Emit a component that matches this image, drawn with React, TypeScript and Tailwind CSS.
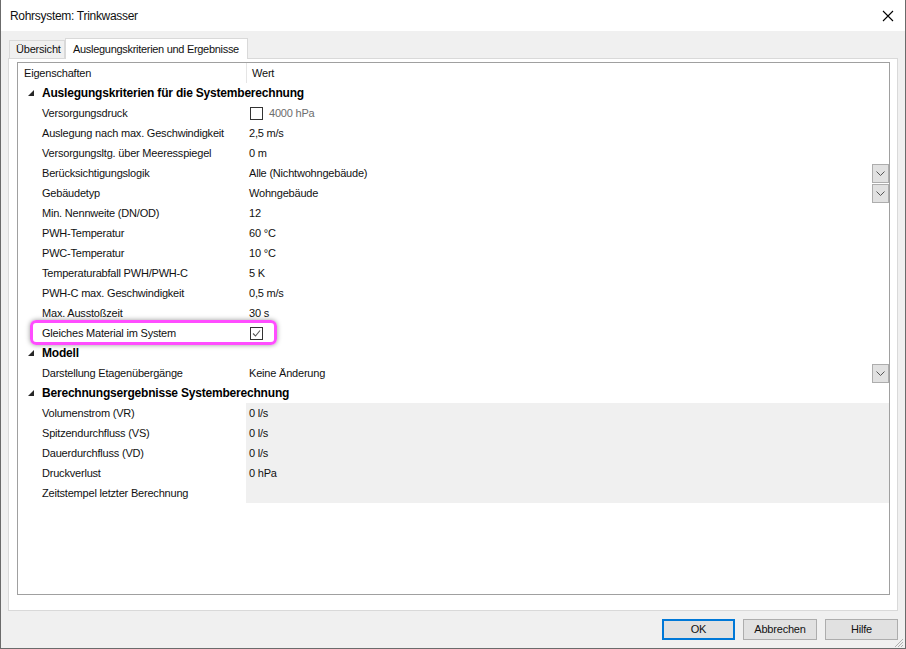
import React from 'react'

type Row =
  | { kind: 'cat'; label: string }
  | { kind: 'prop'; label: string; value?: string; dropdown?: boolean; check?: 'off' | 'on'; muted?: string; result?: boolean; highlight?: boolean }

const rows: Row[] = [
  { kind: 'cat', label: 'Auslegungskriterien für die Systemberechnung' },
  { kind: 'prop', label: 'Versorgungsdruck', check: 'off', muted: '4000 hPa' },
  { kind: 'prop', label: 'Auslegung nach max. Geschwindigkeit', value: '2,5 m/s' },
  { kind: 'prop', label: 'Versorgungsltg. über Meeresspiegel', value: '0 m' },
  { kind: 'prop', label: 'Berücksichtigungslogik', value: 'Alle (Nichtwohngebäude)', dropdown: true },
  { kind: 'prop', label: 'Gebäudetyp', value: 'Wohngebäude', dropdown: true },
  { kind: 'prop', label: 'Min. Nennweite (DN/OD)', value: '12' },
  { kind: 'prop', label: 'PWH-Temperatur', value: '60 °C' },
  { kind: 'prop', label: 'PWC-Temperatur', value: '10 °C' },
  { kind: 'prop', label: 'Temperaturabfall PWH/PWH-C', value: '5 K' },
  { kind: 'prop', label: 'PWH-C max. Geschwindigkeit', value: '0,5 m/s' },
  { kind: 'prop', label: 'Max. Ausstoßzeit', value: '30 s' },
  { kind: 'prop', label: 'Gleiches Material im System', check: 'on', highlight: true },
  { kind: 'cat', label: 'Modell' },
  { kind: 'prop', label: 'Darstellung Etagenübergänge', value: 'Keine Änderung', dropdown: true },
  { kind: 'cat', label: 'Berechnungsergebnisse Systemberechnung' },
  { kind: 'prop', label: 'Volumenstrom (VR)', value: '0 l/s', result: true },
  { kind: 'prop', label: 'Spitzendurchfluss (VS)', value: '0 l/s', result: true },
  { kind: 'prop', label: 'Dauerdurchfluss (VD)', value: '0 l/s', result: true },
  { kind: 'prop', label: 'Druckverlust', value: '0 hPa', result: true },
  { kind: 'prop', label: 'Zeitstempel letzter Berechnung', value: '', result: true },
]

function Checkbox({ checked }: { checked: boolean }) {
  return (
    <span className="w-[13px] h-[13px] border border-[#333333] bg-white flex items-center justify-center">
      {checked && (
        <svg width="9" height="9" viewBox="0 0 9 9">
          <path d="M1 4.5 L3.5 7 L8 1.5" fill="none" stroke="#555555" strokeWidth="1.1" />
        </svg>
      )}
    </span>
  )
}

function DropButton() {
  return (
    <span className="absolute right-0 top-[1px] w-[17px] h-[19px] bg-[#e1e1e1] border border-[#adadad] flex items-center justify-center">
      <svg width="9" height="5" viewBox="0 0 9 5">
        <path d="M0.5 0.5 L4.5 4.5 L8.5 0.5" fill="none" stroke="#555555" strokeWidth="1" />
      </svg>
    </span>
  )
}

function Triangle() {
  return (
    <svg width="6" height="6" viewBox="0 0 6 6" className="shrink-0">
      <polygon points="6,0 6,6 0,6" fill="#262626" />
    </svg>
  )
}

export default function App() {
  return (
    <div className="w-[906px] h-[649px] flex flex-col border-x border-b border-[#6b6b6b] bg-[#f0f0f0] font-['Liberation_Sans',Arial,sans-serif] text-[11px] tracking-[-0.2px] text-[#111] overflow-hidden">
      {/* Title bar */}
      <div className="h-[31px] shrink-0 bg-white flex items-center justify-between pl-[9px] pr-[10px]">
        <span className="text-[12px] tracking-[-0.3px]">Rohrsystem: Trinkwasser</span>
        <svg width="12" height="12" viewBox="0 0 12 12" className="mr-[1px]">
          <path d="M1 1 L11 11 M11 1 L1 11" stroke="#000" strokeWidth="1.1" />
        </svg>
      </div>

      <div className="flex-1 flex flex-col px-[7px] pt-[7px]">
        {/* Tabs */}
        <div className="flex items-end h-[20px] pl-[1px]">
          <div className="w-[56px] h-[18px] border border-b-0 border-[#d9d9d9] bg-[#f0f0f0] flex items-center pl-[6px]">
            Übersicht
          </div>
          <div className="w-[183px] h-[21px] -mb-px relative z-10 border border-b-0 border-[#d9d9d9] bg-white flex items-center pl-[7px] tracking-[-0.3px]">
            Auslegungskriterien und Ergebnisse
          </div>
        </div>

        {/* Panel */}
        <div className="h-[553px] shrink-0 bg-white border border-[#d9d9d9] pl-[8px] pr-[7px] pt-[3px] pb-[15px] flex flex-col">
          <div className="flex-1 border border-[#a0a0a0] flex flex-col">
            <div className="h-[20px] flex items-center">
              <div className="w-[228px] pl-[6px]">Eigenschaften</div>
              <div className="flex-1 h-full border-l border-[#e5e5e5] flex items-center pl-[5px]">Wert</div>
            </div>
            {rows.map((r, i) =>
              r.kind === 'cat' ? (
                <div key={i} className="h-[20px] flex items-center pl-[10px] gap-[8px] font-bold text-[12px] tracking-[-0.2px] text-black">
                  <Triangle />
                  <span>{r.label}</span>
                </div>
              ) : (
                <div key={i} className="h-[20px] flex relative">
                  {r.highlight && (
                    <div className="absolute left-[12px] top-[-3px] w-[247px] h-[25px] rounded-[6px] border-[3px] border-[#ff4dff] shadow-[0_0_5px_rgba(0,0,0,0.4)] pointer-events-none" />
                  )}
                  <div className="w-[228px] flex items-center pl-[24px] whitespace-nowrap">{r.label}</div>
                  <div className={`flex-1 relative flex items-center ${r.result ? 'bg-[#f0f0f0]' : ''} ${r.check ? 'pl-[4px]' : 'pl-[3px]'}`}>
                    {r.check ? (
                      <span className="flex items-center gap-[6px]">
                        <Checkbox checked={r.check === 'on'} />
                        {r.muted && <span className="text-[#6d6d6d]">{r.muted}</span>}
                      </span>
                    ) : (
                      <span>{r.value}</span>
                    )}
                    {r.dropdown && <DropButton />}
                  </div>
                </div>
              )
            )}
          </div>
        </div>

        {/* Buttons */}
        <div className="flex justify-end gap-[8px] mt-[8px] relative">
          <button className="w-[73px] h-[21px] bg-[#e1e1e1] border-2 border-[#0078d7] flex items-center justify-center">OK</button>
          <button className="w-[74px] h-[21px] bg-[#e1e1e1] border border-[#adadad] flex items-center justify-center">Abbrechen</button>
          <button className="w-[73px] h-[21px] bg-[#e1e1e1] border border-[#adadad] flex items-center justify-center">Hilfe</button>
          <svg width="11" height="11" viewBox="0 0 11 11" className="absolute right-[-6px] top-[18px]">
            <path d="M10 2 L2 10 M10 5 L5 10 M10 8 L8 10" stroke="#b0b0b0" strokeWidth="1" />
          </svg>
        </div>
      </div>
    </div>
  )
}
